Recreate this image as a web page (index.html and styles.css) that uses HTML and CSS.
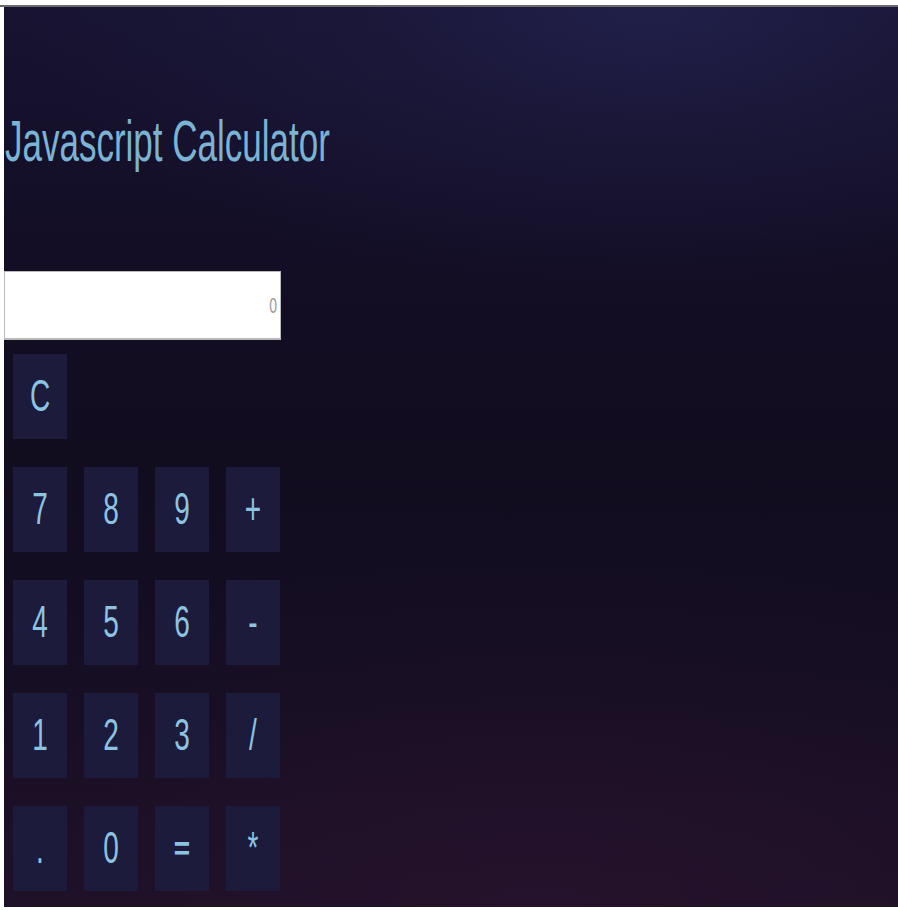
FILE: index.html
```html
<!DOCTYPE html>
<html lang="en">
<head>
<meta charset="utf-8">
<title>Javascript Calculator</title>
<link rel="stylesheet" href="styles.css">
</head>
<body>
<div class="frame">
  <div class="topbar"></div>
  <main class="app">
    <h1 class="title"><span class="title-text">Javascript Calculator</span></h1>
    <div class="display"><span class="display-value">0</span></div>
    <div class="keys">
      <div class="row">
        <button class="key"><span>C</span></button>
      </div>
      <div class="row">
        <button class="key"><span>7</span></button>
        <button class="key"><span>8</span></button>
        <button class="key"><span>9</span></button>
        <button class="key"><span>+</span></button>
      </div>
      <div class="row">
        <button class="key"><span>4</span></button>
        <button class="key"><span>5</span></button>
        <button class="key"><span>6</span></button>
        <button class="key"><span>-</span></button>
      </div>
      <div class="row">
        <button class="key"><span>1</span></button>
        <button class="key"><span>2</span></button>
        <button class="key"><span>3</span></button>
        <button class="key"><span>/</span></button>
      </div>
      <div class="row">
        <button class="key"><span>.</span></button>
        <button class="key"><span>0</span></button>
        <button class="key key-eq"><span>=</span></button>
        <button class="key"><span>*</span></button>
      </div>
    </div>
  </main>
</div>
</body>
</html>
```

FILE: styles.css
```css
html, body {
  margin: 0;
  padding: 0;
  background: #ffffff;
  height: 100%;
}

body {
  font-family: "Liberation Sans", Arial, sans-serif;
}

.frame {
  display: flex;
  flex-direction: column;
  height: 910px;
  padding: 5px 0 3px 4px;
  box-sizing: border-box;
  background: #ffffff;
}

.topbar {
  height: 2px;
  margin-left: -4px;
  background: #6a6a6a;
  flex: none;
}

.app {
  flex: 1;
  display: flex;
  flex-direction: column;
  background:
    radial-gradient(ellipse 70% 32% at 72% 0%, rgba(34, 34, 78, 0.85) 0%, rgba(30, 28, 66, 0.5) 45%, rgba(20, 14, 36, 0) 100%),
    radial-gradient(ellipse 90% 40% at 60% 100%, rgba(38, 18, 44, 0.9) 0%, rgba(30, 16, 38, 0.4) 60%, rgba(18, 12, 30, 0) 100%),
    linear-gradient(to bottom, #171331 0%, #130e25 28%, #120c1f 50%, #150e23 75%, #1f1129 100%);
}

.title {
  margin: 0;
  height: 264px;
  padding-top: 105px;
  box-sizing: border-box;
  font-weight: normal;
  font-size: 35px;
  line-height: 35px;
  color: #7ab3d3;
}

.title-text {
  display: inline-block;
  margin-left: 1px;
  transform: scaleY(1.62);
  transform-origin: top left;
}

.display {
  width: 277px;
  height: 69px;
  box-sizing: border-box;
  background: #ffffff;
  border: 1px solid #b9b9b9;
  border-bottom-width: 2px;
  display: flex;
  align-items: center;
  justify-content: flex-end;
  padding-right: 3px;
  font-size: 14px;
  line-height: 14px;
  color: #9a9a9a;
}

.display-value {
  display: inline-block;
  transform: scaleY(1.6);
}

.keys {
  display: flex;
  flex-direction: column;
  gap: 28px;
  margin-top: 14px;
  padding-left: 9px;
}

.row {
  display: flex;
  gap: 17px;
}

.key {
  width: 54px;
  height: 85px;
  padding: 0;
  border: none;
  background: #1c1b3b;
  color: #8cc3e1;
  font-family: "Liberation Sans", Arial, sans-serif;
  font-size: 28px;
  line-height: 28px;
  display: flex;
  align-items: center;
  justify-content: center;
}

.key span {
  display: inline-block;
  transform: scaleY(1.6);
}

.key-eq span {
  font-weight: bold;
  transform: scaleY(1.2);
}
```
